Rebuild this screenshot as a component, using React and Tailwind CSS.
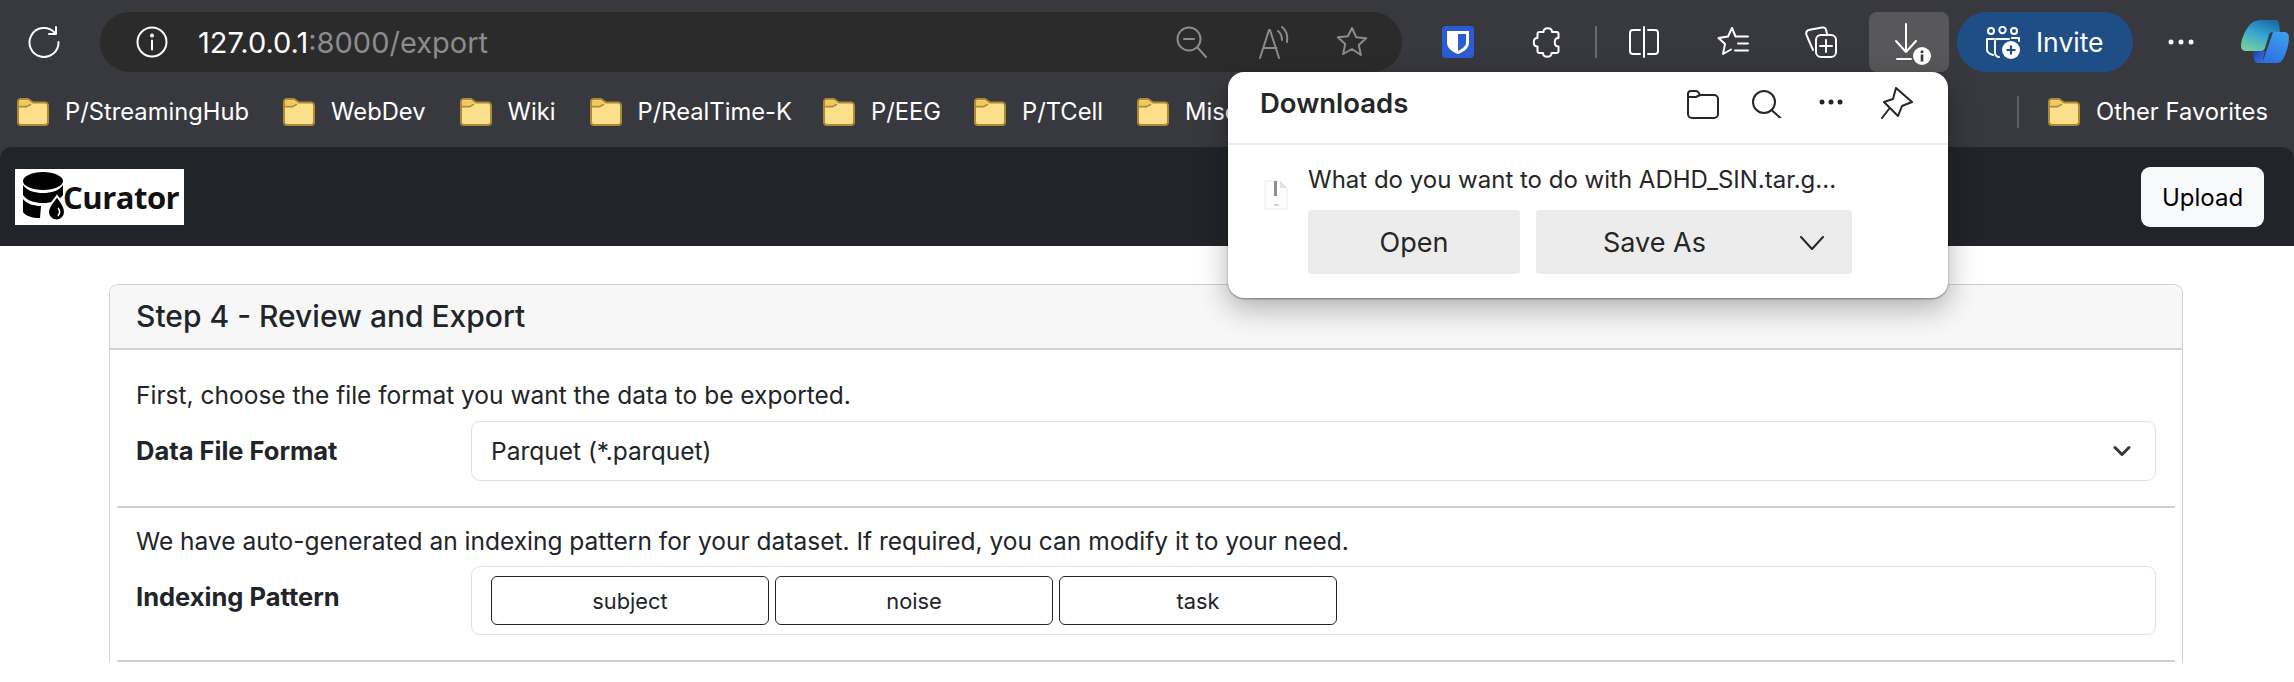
import React from "react";

const Folder = () => (
  <svg width="32" height="28" viewBox="0 0 32 28" className="shrink-0">
    <path d="M1 4a3 3 0 0 1 3-3h7l5 3.5h12a3 3 0 0 1 3 3V24a3 3 0 0 1-3 3H4a3 3 0 0 1-3-3Z" fill="#fbdf8a" stroke="#ad8a36" strokeWidth="2" />
    <path d="M1 8.5h8.5L14 6" fill="none" stroke="#ad8a36" strokeWidth="2" />
    <path d="M2 2.5h8l4 3-4.5 2H2Z" fill="#f0c860" />
  </svg>
);

const Bookmark = ({ label, className }) => (
  <div className={"flex items-center gap-[16px] shrink-0 " + (className || "")}>
    <Folder />
    <span className="whitespace-nowrap text-[23.75px] leading-none text-white">{label}</span>
  </div>
);

const Stroke = ({ w, h, vb, color = "#fff", sw = 2, children, className }) => (
  <svg width={w} height={h} viewBox={vb || `0 0 ${w} ${h}`} fill="none" stroke={color} strokeWidth={sw} strokeLinecap="round" strokeLinejoin="round" className={"shrink-0 " + (className || "")}>
    {children}
  </svg>
);

const ToolbarLeft = () => (
  <div className="flex items-center h-[84px] pl-[28px] shrink-0">
    <Stroke w={32} h={32}>
      <path d="M26.5 6.5A14.5 14.5 0 1 0 30.5 16" />
      <path d="M28 1v7h-7" />
    </Stroke>
    <div className="ml-[40px] w-[1302px] h-[60px] rounded-full bg-[#2b2b2b] flex items-center pl-[36px] pr-[34px]">
      <Stroke w={32} h={32}>
        <circle cx="16" cy="16" r="14.5" />
        <path d="M16 14.5v9" />
        <circle cx="16" cy="9.5" r="1" fill="#fff" />
      </Stroke>
      <span className="ml-[30px] text-[29px] leading-none whitespace-nowrap text-white">
        127.0.0.1<span className="text-[#8c8c8c]">:8000/export</span>
      </span>
      <div className="ml-auto flex items-center">
        <Stroke w={32} h={32} color="#8c8c8c">
          <circle cx="13" cy="13" r="11.5" />
          <path d="M8 13h10M21.5 21.5 30 31" />
        </Stroke>
        <Stroke w={32} h={34} color="#8c8c8c" className="ml-[50px]">
          <path d="M2 33 11 5h1l9 28M5.5 23h13" />
          <path d="M20 6c2.500 2 4 5 4 9M24 2c4 3 6 8 5 15" />
        </Stroke>
        <Stroke w={32} h={32} color="#8c8c8c" className="ml-[46px]">
          <path d="m16 2 4.2 9.2 10 1.1-7.4 6.8 2.1 9.9L16 23l-8.9 5 2.1-9.9-7.4-6.8 10-1.1Z" />
        </Stroke>
      </div>
    </div>
  </div>
);

const ToolbarRight = () => (
  <div className="flex items-center h-[84px] ml-[40px]">
    <svg width="32" height="32" viewBox="0 0 32 32" className="shrink-0">
      <rect width="32" height="32" rx="4" fill="#2b5cd6" />
      <path d="M5 5h22v12c0 5-5.500 9-11 11-5.500-2-11-6-11-11Z" fill="#fff" />
      <path d="M16 8h8v9c0 3-4 6-8 8Z" fill="#2b5cd6" />
    </svg>
    <Stroke w={30} h={32} vb="-1 0 29 32" className="ml-[58px]">
      <path d="M10 6C10 1 18.500 1 18.500 6H23a2 2 0 0 1 2 2v4c-5 0-5 8.500 0 8.500V25a2 2 0 0 1-2 2h-5c0 5-8.500 5-8.500 0H6a2 2 0 0 1-2-2v-4.500c-5 0-5-8.500 0-8.500V8a2 2 0 0 1 2-2Z" />
    </Stroke>
    <div className="ml-[33px] w-[2px] h-[32px] bg-[#6a6b6f] shrink-0" />
    <Stroke w={30} h={32} className="ml-[32px]">
      <path d="M11 4H4a3 3 0 0 0-3 3v18a3 3 0 0 0 3 3h7M19 4h7a3 3 0 0 1 3 3v18a3 3 0 0 1-3 3h-7M15 1v30" />
    </Stroke>
    <Stroke w={32} h={32} className="ml-[58px]">
      <path d="M15 2 11 10.500 1.500 12l6.500 6-2 10 8-4.500M15 2l3.500 8.500H31M21 17.500h10M18 24.500h13" />
    </Stroke>
    <Stroke w={32} h={33} className="ml-[56px]">
      <path d="M8 24 1.500 9a4 4 0 0 1 2-5L17 1.500c2-.3 3.500 .5 4 2L22 8" />
      <rect x="11" y="9" width="20" height="22" rx="5" />
      <path d="M21 14v12M15 20h12" />
    </Stroke>
    <div className="ml-[32px] relative w-[80px] h-[60px] rounded-[8px] bg-[#58585a] flex items-center justify-center shrink-0">
      <Stroke w={40} h={40}>
        <path d="M17 2v28M7 19l10 11 10-11M8 37h14" />
      </Stroke>
      <svg width="18" height="18" viewBox="0 0 18 18" className="absolute left-[44px] top-[35px]">
        <circle cx="9" cy="9" r="9" fill="#fff" />
        <rect x="7.700" y="7.500" width="2.600" height="7" fill="#38393e" />
        <circle cx="9" cy="4.800" r="1.500" fill="#38393e" />
      </svg>
    </div>
    <div className="ml-[8px] w-[176px] h-[60px] rounded-full bg-[#1f4e87] flex items-center pl-[29px] shrink-0">
      <div className="relative w-[34px] h-[32px] shrink-0">
        <Stroke w={34} h={32}>
          <circle cx="5" cy="5" r="3" />
          <circle cx="16.500" cy="4" r="3.200" />
          <circle cx="28" cy="5" r="3" />
          <path d="M7 29c-3-1-6-2-6-5V13h7M26 12h7v3M10 13h13" />
          <path d="M13 31c-2 0-4-2-4-4V15" />
        </Stroke>
        <svg width="18" height="18" viewBox="0 0 18 18" className="absolute left-[16px] top-[15px]">
          <circle cx="9" cy="9" r="9" fill="#fff" />
          <path d="M9 4.500v9M4.500 9h9" stroke="#1f4e87" strokeWidth="2.200" />
        </svg>
      </div>
      <span className="ml-[16px] text-[26.500px] leading-none text-white">Invite</span>
    </div>
    <svg width="26" height="6" viewBox="0 0 26 6" className="ml-[35px] shrink-0" fill="#fff">
      <circle cx="3" cy="3" r="2.500" />
      <circle cx="13" cy="3" r="2.500" />
      <circle cx="23" cy="3" r="2.500" />
    </svg>
    <svg width="48" height="44" viewBox="0 0 48 44" className="ml-[47px] shrink-0">
      <defs>
        <linearGradient id="cpA" x1="0.700" y1="0" x2="0.200" y2="1">
          <stop offset="0" stopColor="#1a6ea8" />
          <stop offset="0.450" stopColor="#35a5d4" />
          <stop offset="1" stopColor="#78d19a" />
        </linearGradient>
        <linearGradient id="cpB" x1="0.800" y1="0" x2="0.300" y2="1">
          <stop offset="0" stopColor="#3aa0ee" />
          <stop offset="1" stopColor="#2f6fe0" />
        </linearGradient>
        <linearGradient id="cpC" x1="0" y1="0" x2="1" y2="1">
          <stop offset="0" stopColor="#1d3fa8" />
          <stop offset="1" stopColor="#3f78e8" />
        </linearGradient>
      </defs>
      <path d="M12 31h12l-2 8c-.6 3-2.500 4-5 4-3.500 0-4.500-3-5-12Z" fill="url(#cpC)" />
      <path d="M32 12h11c3 0 5 2 5 6 0 6-3 16-6 21-1.500 3-3.500 4-7 4H17c3 0 5-1.500 6-5Z" fill="url(#cpB)" />
      <path d="M22 0h12c3 0 4 2 4 4l1 8h-7c-2.500 0-3.500 1-4 3L24 28c-.7 2-2 3-4 3H5c-3 0-5-2-5-5 0-8 6-20 12-24 3-1.500 6-2 10-2Z" fill="url(#cpA)" />
    </svg>
  </div>
);

const BookmarksBar = () => (
  <div className="flex items-center h-[63px] pb-[8px] pl-[17px] gap-[34px] overflow-hidden">
    <Bookmark label="P/StreamingHub" />
    <Bookmark label="WebDev" />
    <Bookmark label="Wiki" />
    <Bookmark label="P/RealTime-K" />
    <Bookmark label="P/EEG" className="-ml-[3px]" />
    <Bookmark label="P/TCell" className="-ml-[1px]" />
    <Bookmark label="Misc" />
    <div className="ml-auto flex items-center shrink-0 pr-[26px]">
      <div className="w-[2px] h-[32px] bg-[#5f6064] mr-[29px]" />
      <Bookmark label="Other Favorites" />
    </div>
  </div>
);

const Logo = () => (
  <div className="w-[169px] h-[56px] bg-white flex items-center relative pl-[7px] shrink-0">
    <svg width="42" height="50" viewBox="0 0 42 50" className="shrink-0">
      <ellipse cx="21" cy="9" rx="20" ry="9" fill="#000" />
      <path d="M1 13c4 6 12 8 20 8 8 0 16-2 20-8v10c-4 6-12 8-20 8s-16-2-20-8Z" fill="#000" />
      <path d="M1 27c4 5 11 7 18 7l-1 12c-8 0-14-2-17-6Z" fill="#000" />
      <path d="M35 24c4 6 8 10 8 16a8.500 8.500 0 0 1-17 0c0-6 5-10 9-16Z" fill="#000" stroke="#fff" strokeWidth="2" />
      <path d="M36 36c2 2 2 5 0 8" fill="none" stroke="#fff" strokeWidth="1.500" />
    </svg>
    <span className="ml-[-1px] mt-[2px] text-[31px] tracking-[-0.5px] leading-none font-bold text-[#111] font-['Open_Sans',sans-serif]">Curator</span>
  </div>
);

const Navbar = () => (
  <div className="h-[99px] bg-[#212529] rounded-t-[12px] flex items-center justify-between pl-[15px] pr-[30px]">
    <Logo />
    <button className="w-[123px] h-[60px] rounded-[9px] bg-[#f8f9fa] text-[#000] text-[24px] leading-none pt-[2px]">Upload</button>
  </div>
);

const Select = () => (
  <div className="flex-1 h-[60px] border border-[#dee2e6] rounded-[9px] flex items-center pl-[19px] pr-[24px] text-[24.500px]">
    <span>Parquet (*.parquet)</span>
    <Stroke w={18} h={12} vb="0 0 18 12" color="#343a40" sw={3} className="ml-auto">
      <path d="M2 2.500 9 9.500l7-7" />
    </Stroke>
  </div>
);

const Chip = ({ children }) => (
  <div className="w-[278px] h-[49px] border border-[#212529] rounded-[6px] flex items-center justify-center text-[21.800px] pt-[2px]">
    {children}
  </div>
);

const Card = () => (
  <div className="mt-[38px] ml-[109px] w-[2074px] border border-[#d0d0d0] border-b-0 rounded-t-[9px] text-[#212529]">
    <div className="h-[65px] bg-[#f7f7f7] border-b-2 border-[#d4d4d4] rounded-t-[9px] flex items-center pl-[26px] text-[30px] font-medium">
      Step 4 - Review and Export
    </div>
    <div className="pl-[26px] pr-[26px]">
      <p className="mt-[27px] h-[36px] text-[24.500px] leading-[36px]">First, choose the file format you want the data to be exported.</p>
      <div className="mt-[8px] flex items-center">
        <div className="w-[335px] shrink-0 text-[25.500px] font-bold">Data File Format</div>
        <Select />
      </div>
      <div className="-mx-[19px] mt-[25px] h-[2px] bg-[#cfcfcf]" />
      <p className="mt-[15px] h-[36px] text-[24.500px] leading-[36px]">We have auto-generated an indexing pattern for your dataset. If required, you can modify it to your need.</p>
      <div className="mt-[7px] flex items-start">
        <div className="w-[335px] shrink-0 text-[25.500px] font-bold mt-[12px]">Indexing Pattern</div>
        <div className="flex-1 h-[69px] border border-[#dee2e6] rounded-[9px] flex items-center gap-[6px] pl-[19px]">
          <Chip>subject</Chip>
          <Chip>noise</Chip>
          <Chip>task</Chip>
        </div>
      </div>
      <div className="-mx-[19px] mt-[25px] h-[2px] bg-[#cfcfcf]" />
    </div>
  </div>
);

const FileIcon = () => (
  <svg width="24" height="30" viewBox="0 0 24 30" className="shrink-0">
    <path d="M1 1h15l7 7v21H1Z" fill="#fdfdfd" stroke="#ececec" strokeWidth="1" />
    <path d="M16 1v7h7Z" fill="#e2e2e2" />
    <rect x="10" y="1" width="3" height="15" fill="#8e8e8e" />
    <rect x="10.500" y="24" width="4" height="2" fill="#cfcfcf" />
  </svg>
);

const DownloadsPanel = () => (
  <div className="absolute left-[1228px] top-[72px] w-[720px] h-[226px] bg-white rounded-[16px] shadow-[0_10px_30px_rgba(0,0,0,0.3),0_1px_2px_rgba(0,0,0,0.4)] text-[#262626]">
    <div className="h-[73px] border-b-2 border-[#ebebeb] flex items-center pl-[32px] pr-[35px] pb-[7px]">
      <span className="text-[27.500px] font-semibold leading-none">Downloads</span>
      <div className="ml-auto flex items-center">
        <Stroke w={32} h={29} color="#262626">
          <path d="M4 1h5a3 3 0 0 1 2.500 1.500L13 5h14a4 4 0 0 1 4 4v15a4 4 0 0 1-4 4H5a4 4 0 0 1-4-4V4a3 3 0 0 1 3-3Z" />
          <path d="M1 7h8l4-2" />
        </Stroke>
        <Stroke w={30} h={28} color="#262626" className="ml-[33px]">
          <circle cx="12" cy="12" r="11" />
          <path d="m19.500 20 9 8" />
        </Stroke>
        <svg width="24" height="6" viewBox="0 0 24 6" fill="#262626" className="ml-[37px] mb-[4px] shrink-0">
          <circle cx="3" cy="3" r="2.500" />
          <circle cx="12" cy="3" r="2.500" />
          <circle cx="21" cy="3" r="2.500" />
        </svg>
        <Stroke w={32} h={32} color="#262626" className="ml-[38px] mb-[2px]">
          <path d="M15 1 31 15l-10 4-4 10L3 15l9-3Z" />
          <path d="M8 22 1 31" />
        </Stroke>
      </div>
    </div>
    <div className="flex pt-[20px] pl-[36px]">
      <div className="mt-[15px]">
        <FileIcon />
      </div>
      <div className="ml-[20px]">
        <div className="text-[24px] leading-[30px] whitespace-nowrap">What do you want to do with ADHD_SIN.tar.g...</div>
        <div className="mt-[15px] flex gap-[16px]">
          <div className="w-[212px] h-[64px] bg-[#ececec] rounded-[3px] flex items-center justify-center text-[27px] pt-[2px]">Open</div>
          <div className="w-[316px] h-[64px] bg-[#ececec] rounded-[3px] flex items-center pl-[67px] pr-[28px] pt-[2px] text-[27px]">
            <span>Save As</span>
            <Stroke w={24} h={14} color="#262626" className="ml-auto">
              <path d="m1 1 11 12L23 1" />
            </Stroke>
          </div>
        </div>
      </div>
    </div>
  </div>
);

export default function App() {
  return (
    <div className="relative w-[2294px] h-[682px] overflow-hidden bg-white font-['Inter',sans-serif]">
      <div className="bg-[#38393e]">
        <div className="flex items-center">
          <ToolbarLeft />
          <ToolbarRight />
        </div>
        <BookmarksBar />
      </div>
      <div className="bg-[#38393e]">
        <Navbar />
      </div>
      <Card />
      <DownloadsPanel />
    </div>
  );
}
